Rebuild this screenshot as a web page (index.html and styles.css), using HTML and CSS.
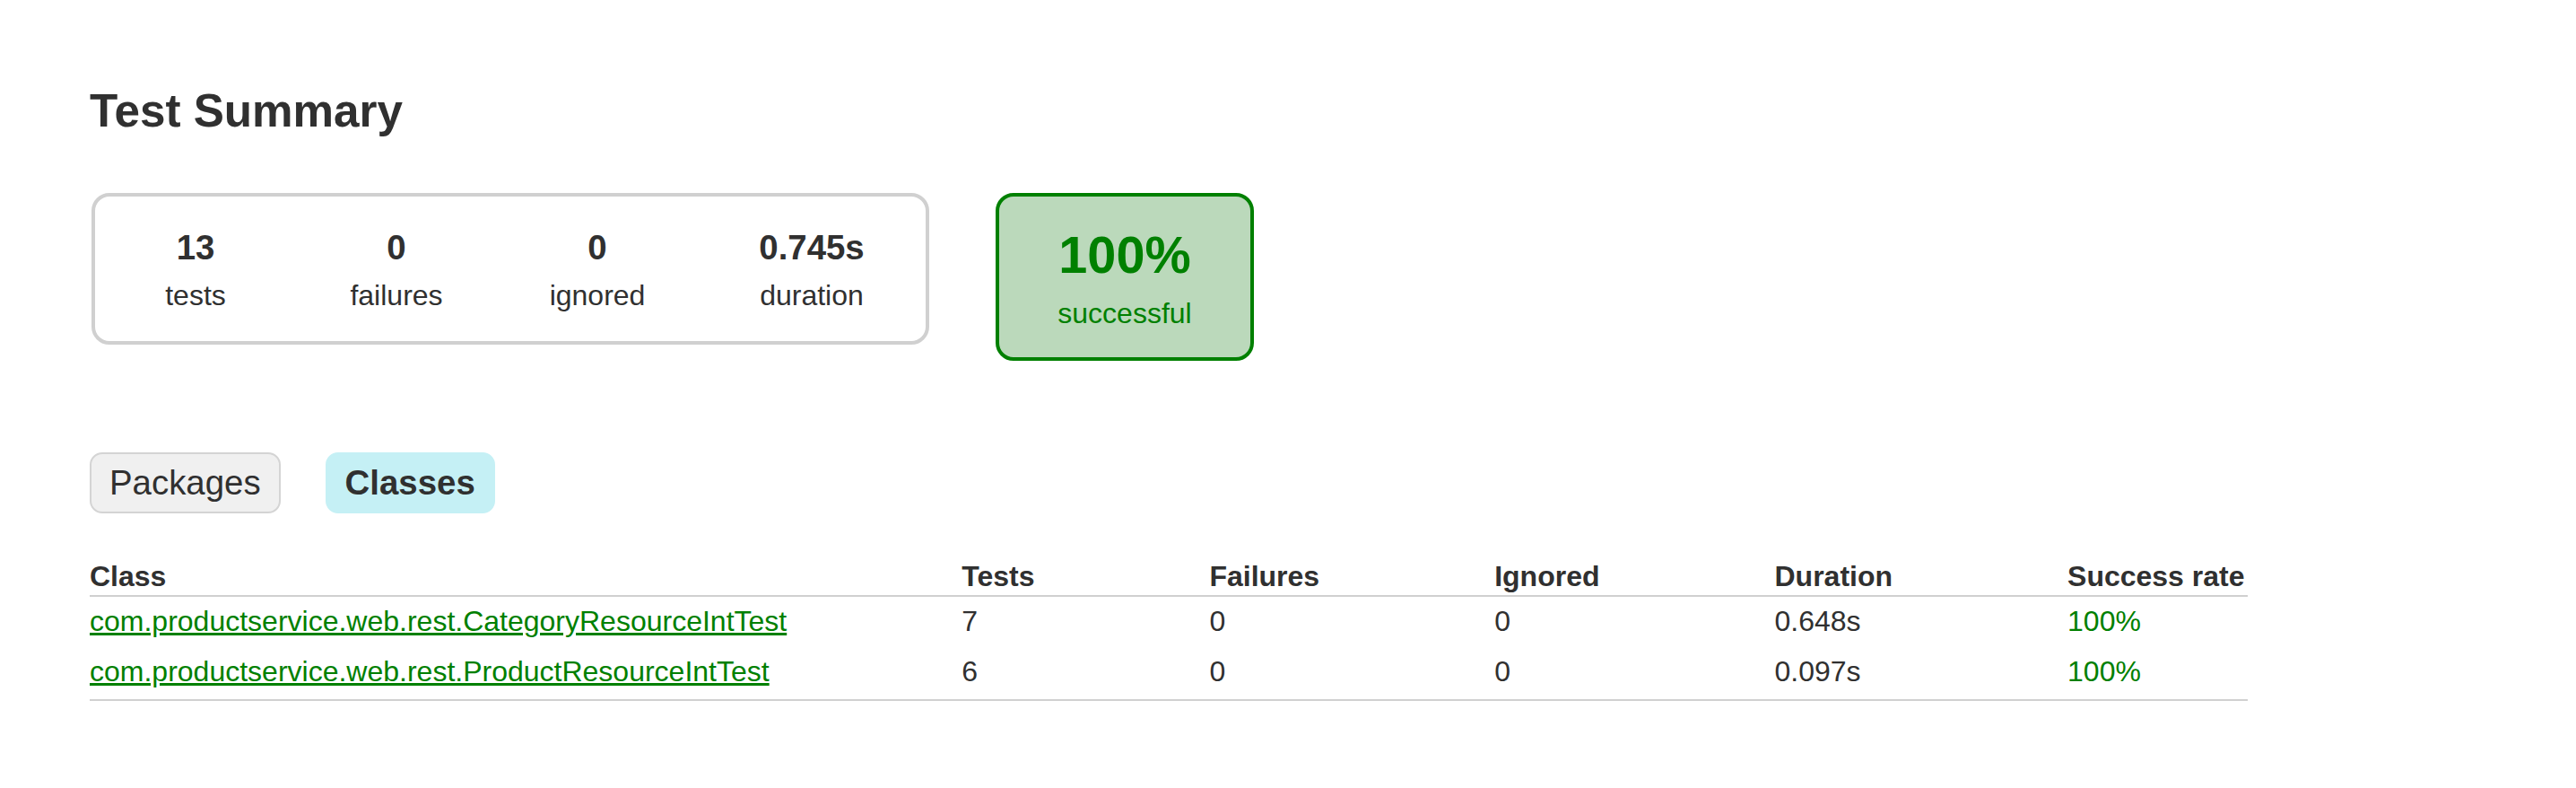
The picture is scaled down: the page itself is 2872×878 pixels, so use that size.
FILE: index.html
```html
<!DOCTYPE html>
<html>
<head>
<meta charset="utf-8">
<title>Test results - Test Summary</title>
<link rel="stylesheet" href="styles.css">
</head>
<body>
<div id="content">
  <h1>Test Summary</h1>
  <div id="summary">
    <table class="summary-layout">
      <tr>
        <td>
          <div class="summaryGroup">
            <table class="summary-inner">
              <tr>
                <td>
                  <div class="infoBox">
                    <div class="counter">13</div>
                    <p>tests</p>
                  </div>
                </td>
                <td>
                  <div class="infoBox">
                    <div class="counter">0</div>
                    <p>failures</p>
                  </div>
                </td>
                <td>
                  <div class="infoBox">
                    <div class="counter">0</div>
                    <p>ignored</p>
                  </div>
                </td>
                <td>
                  <div class="infoBox duration">
                    <div class="counter">0.745s</div>
                    <p>duration</p>
                  </div>
                </td>
              </tr>
            </table>
          </div>
        </td>
        <td>
          <div class="infoBox successRate success">
            <div class="percent">100%</div>
            <p>successful</p>
          </div>
        </td>
      </tr>
    </table>
  </div>
  <div class="tabs">
    <ul class="tabLinks">
      <li><a class="tab-link" href="#tab0">Packages</a></li>
      <li class="selected"><h2 class="tab-title">Classes</h2></li>
    </ul>
    <div class="tab">
      <table class="results">
        <thead>
          <tr>
            <th>Class</th>
            <th>Tests</th>
            <th>Failures</th>
            <th>Ignored</th>
            <th>Duration</th>
            <th>Success rate</th>
          </tr>
        </thead>
        <tbody>
          <tr>
            <td class="success"><a href="#c1">com.productservice.web.rest.CategoryResourceIntTest</a></td>
            <td>7</td>
            <td>0</td>
            <td>0</td>
            <td>0.648s</td>
            <td class="success">100%</td>
          </tr>
          <tr class="last-row">
            <td class="success"><a href="#c2">com.productservice.web.rest.ProductResourceIntTest</a></td>
            <td>6</td>
            <td>0</td>
            <td>0</td>
            <td>0.097s</td>
            <td class="success">100%</td>
          </tr>
        </tbody>
      </table>
    </div>
  </div>
</div>
</body>
</html>
```
FILE: styles.css
```css
html, body {
  margin: 0;
  padding: 0;
  background: #ffffff;
}
body {
  font-family: "Liberation Sans", Arial, Helvetica, sans-serif;
  font-size: 32px;
  color: #303030;
}
a, a:visited {
  color: #303030;
}
#content {
  padding: 60px 100px;
}
#content h1 {
  font-size: 51.2px;
  margin: 34px 0 20px 0;
  white-space: nowrap;
}
#summary {
  margin-top: 60px;
  margin-bottom: 80px;
}
#summary table {
  border-collapse: collapse;
}
#summary td {
  vertical-align: top;
  padding: 2px;
}
.summaryGroup {
  border: solid 4px #d0d0d0;
  border-radius: 20px;
}
.infoBox {
  width: 220px;
  padding-top: 30px;
  padding-bottom: 30px;
  text-align: center;
}
.infoBox p {
  margin: 0;
}
.counter, .percent {
  font-size: 38.4px;
  font-weight: bold;
  margin-bottom: 16px;
}
.summaryGroup .infoBox {
  padding-top: 33px;
}
.summaryGroup .counter {
  margin-bottom: 13px;
}
.infoBox.duration {
  width: 250px;
}
.successRate {
  width: 280px;
  margin-left: 70px;
  border: solid 4px #008000;
  border-radius: 20px;
  background-color: #bbd9bb;
}
.successRate .percent {
  font-size: 57.6px;
  margin-top: 2px;
  margin-bottom: 14px;
}
.success, .success a, .success a:visited {
  color: #008000;
}
ul.tabLinks {
  padding: 20px 0;
  margin: 0 0 30px 0;
  overflow: auto;
  min-width: 1600px;
  list-style: none;
}
ul.tabLinks li {
  float: left;
  padding: 10px 20px;
  margin-right: 50px;
  border: solid 2px #d4d4d4;
  border-radius: 14px;
  background-color: #f0f0f0;
}
ul.tabLinks li.selected {
  background-color: #c5f0f5;
  border-color: #c5f0f5;
}
ul.tabLinks a.tab-link {
  font-size: 38.4px;
  display: block;
  text-decoration: none;
}
.tab-title {
  font-size: 38.4px;
  margin: 0;
  padding: 0;
  white-space: nowrap;
}
table.results {
  border-collapse: collapse;
  border-bottom: solid #d0d0d0 2px;
}
table.results th {
  text-align: left;
  white-space: nowrap;
  padding: 2px 3px 2px 192px;
  border-bottom: solid #d0d0d0 2px;
}
table.results td {
  white-space: nowrap;
  padding: 9px 3px 10px 192px;
}
table.results tr.last-row td {
  padding-bottom: 12px;
}
table.results th:first-child,
table.results td:first-child {
  padding-left: 0;
}
```
